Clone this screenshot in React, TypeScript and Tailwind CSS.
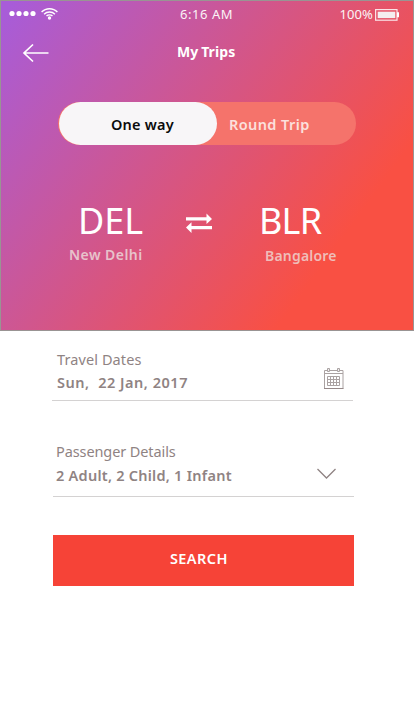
import React from "react";

function StatusBar() {
  return (
    <div className="flex h-[26px] items-start text-[13px] leading-[20px] text-[#fbf3f6]">
      <div className="flex w-[179px] pl-2 pt-[5px]">
        <svg width="50" height="16" viewBox="9 6 50 16" fill="none">
          <g fill="#fff">
            <circle cx="12" cy="13.5" r="2.6" />
            <circle cx="19" cy="13.5" r="2.6" />
            <circle cx="26" cy="13.5" r="2.6" />
            <circle cx="33" cy="13.5" r="2.6" />
            <circle cx="49.5" cy="18" r="1.7" />
          </g>
          <g stroke="#fff" strokeWidth="1.4">
            <path d="M41.6 12.1a11 11 0 0 1 15.8 0" />
            <path d="M44.1 14.2a7.6 7.6 0 0 1 10.8 0" />
            <path d="M46.5 16.1a4.3 4.3 0 0 1 6 0" />
          </g>
        </svg>
      </div>
      <span className="pt-[3px] tracking-[0.55px]">6:16 AM</span>
      <div className="ml-auto flex items-start pr-[13px]">
        <span className="pt-[3px] tracking-[0.1px]">100%</span>
        <svg className="ml-[2px] mt-[8px]" width="25" height="12" viewBox="0 0 25 12">
          <rect x=".6" y=".6" width="21.4" height="10.6" fill="none" stroke="#fbe3e6" strokeWidth="1.2" />
          <rect x="2.7" y="2.7" width="17.6" height="6.4" fill="#f4eeef" />
          <path d="M22 3.2h2v5h-2z" fill="#fff" />
        </svg>
      </div>
    </div>
  );
}

function Calendar() {
  return (
    <svg width="20" height="22" viewBox="0 0 20 22" fill="none" stroke="#aaa2a2">
      <path d="M.5 2.5h18.5v18H.5z M.5 5.5h18.5" />
      <path d="M3.5.5h2v3h-2z M13.5.5h2v3h-2z" fill="#eee" />
      <path d="M3.5 8.5h12v9h-12z M6.5 8.5v9 M9.5 8.5v9 M12.5 8.5v9 M3.5 11.5h12 M3.5 14.5h12" />
      <path d="M0 20.5h19.5" stroke="#968989" />
    </svg>
  );
}

export default function App() {
  return (
    <main className="h-[701px] w-[414px] overflow-hidden bg-white font-['Noto_Sans','Open_Sans',sans-serif]">
      <header className="h-[331px] border border-[#999493] bg-[linear-gradient(126deg,#a85cd8_2%,#f95043_79%)]">
        <StatusBar />
        <nav className="grid h-[50px] grid-cols-[176px_1fr] pt-[14px] text-white">
          <svg className="ml-[21px] mt-[2px]" width="28" height="20" viewBox="0 0 28 20" fill="none" stroke="#fff" strokeWidth="1.7">
            <path d="M26.5 10H2 M11 1.500L2 10l9 8.500" />
          </svg>
          <h1 className="pt-px text-[14px] font-bold leading-[20px] tracking-[0.1px] [word-spacing:-1px]">My Trips</h1>
        </nav>
        <div className="ml-[57px] mt-[25px] flex h-[43px] w-[298px] rounded-full bg-[#f5736b] pl-px text-[14.5px] font-semibold leading-[45px]">
          <button className="w-[158px] rounded-full bg-[#f8f6f8] pl-[52px] text-left tracking-[0.2px] text-[#0b0b0b]">One way</button>
          <button className="pl-[12px] tracking-[0.4px] text-[#fce0dd]">Round Trip</button>
        </div>
        <section className="mt-[50px] grid grid-cols-[107px_74px_1fr] pl-[77px] text-white">
          <strong className="pt-px text-[36px] font-normal leading-[49px]">DEL</strong>
          <svg className="mt-[18px]" width="27" height="21" viewBox="0 0 27 21" fill="#fff">
            <path d="M1 4.2h20.500V.5L27 5.900l-5.500 5.200V7.500H1z M27 16.200H6.500v3.700L1 14.500l5.500-5.200v3.600H27z" />
          </svg>
          <strong className="pt-px text-[36px] font-normal leading-[49px] tracking-[-0.8px]">BLR</strong>
        </section>
        <div className="flex pl-[68px] text-[14px] font-semibold leading-[20px] text-[#e8c2cb]">
          <span className="w-[196px] tracking-[0.45px]">New Delhi</span>
          <span className="mt-px tracking-[0.2px] text-[#efbdb9]">Bangalore</span>
        </div>
      </header>

      <section className="ml-[52px] mt-[17px] flex h-[53px] w-[301px] border-b border-[#d4d2d2] pl-[5px] text-[#8f8383]">
        <div className="w-[266.5px] whitespace-pre">
          <p className="text-[14.5px] leading-[22px] tracking-[0.1px]">Travel Dates</p>
          <p className="text-[14.5px] font-semibold leading-[24px] tracking-[0.52px]">Sun,  22 Jan, 2017</p>
        </div>
        <div className="mt-[20px]"><Calendar /></div>
      </section>

      <section className="ml-[53px] mt-[39px] flex h-[57px] w-[301px] border-b border-[#d4d2d2] pl-[3px] text-[#8f8383]">
        <div className="w-[260px] whitespace-pre">
          <p className="text-[14.5px] leading-[22px] tracking-[-0.1px]">Passenger Details</p>
          <p className="text-[14.5px] font-semibold leading-[26px] tracking-[0.25px]">2 Adult, 2 Child, 1 Infant</p>
        </div>
        <svg className="mt-[27px]" width="21" height="13" viewBox="0 0 21 13" fill="none" stroke="#8f8383" strokeWidth="1.3">
          <path d="M1.5 2l9 9 9-9" />
        </svg>
      </section>

      <button className="ml-[53px] mt-[38px] block h-[51px] w-[301px] bg-[#f64337] pl-[117px] pb-[3px] text-left text-[14.5px] font-semibold tracking-[0.4px] text-white">
        SEARCH
      </button>
    </main>
  );
}
